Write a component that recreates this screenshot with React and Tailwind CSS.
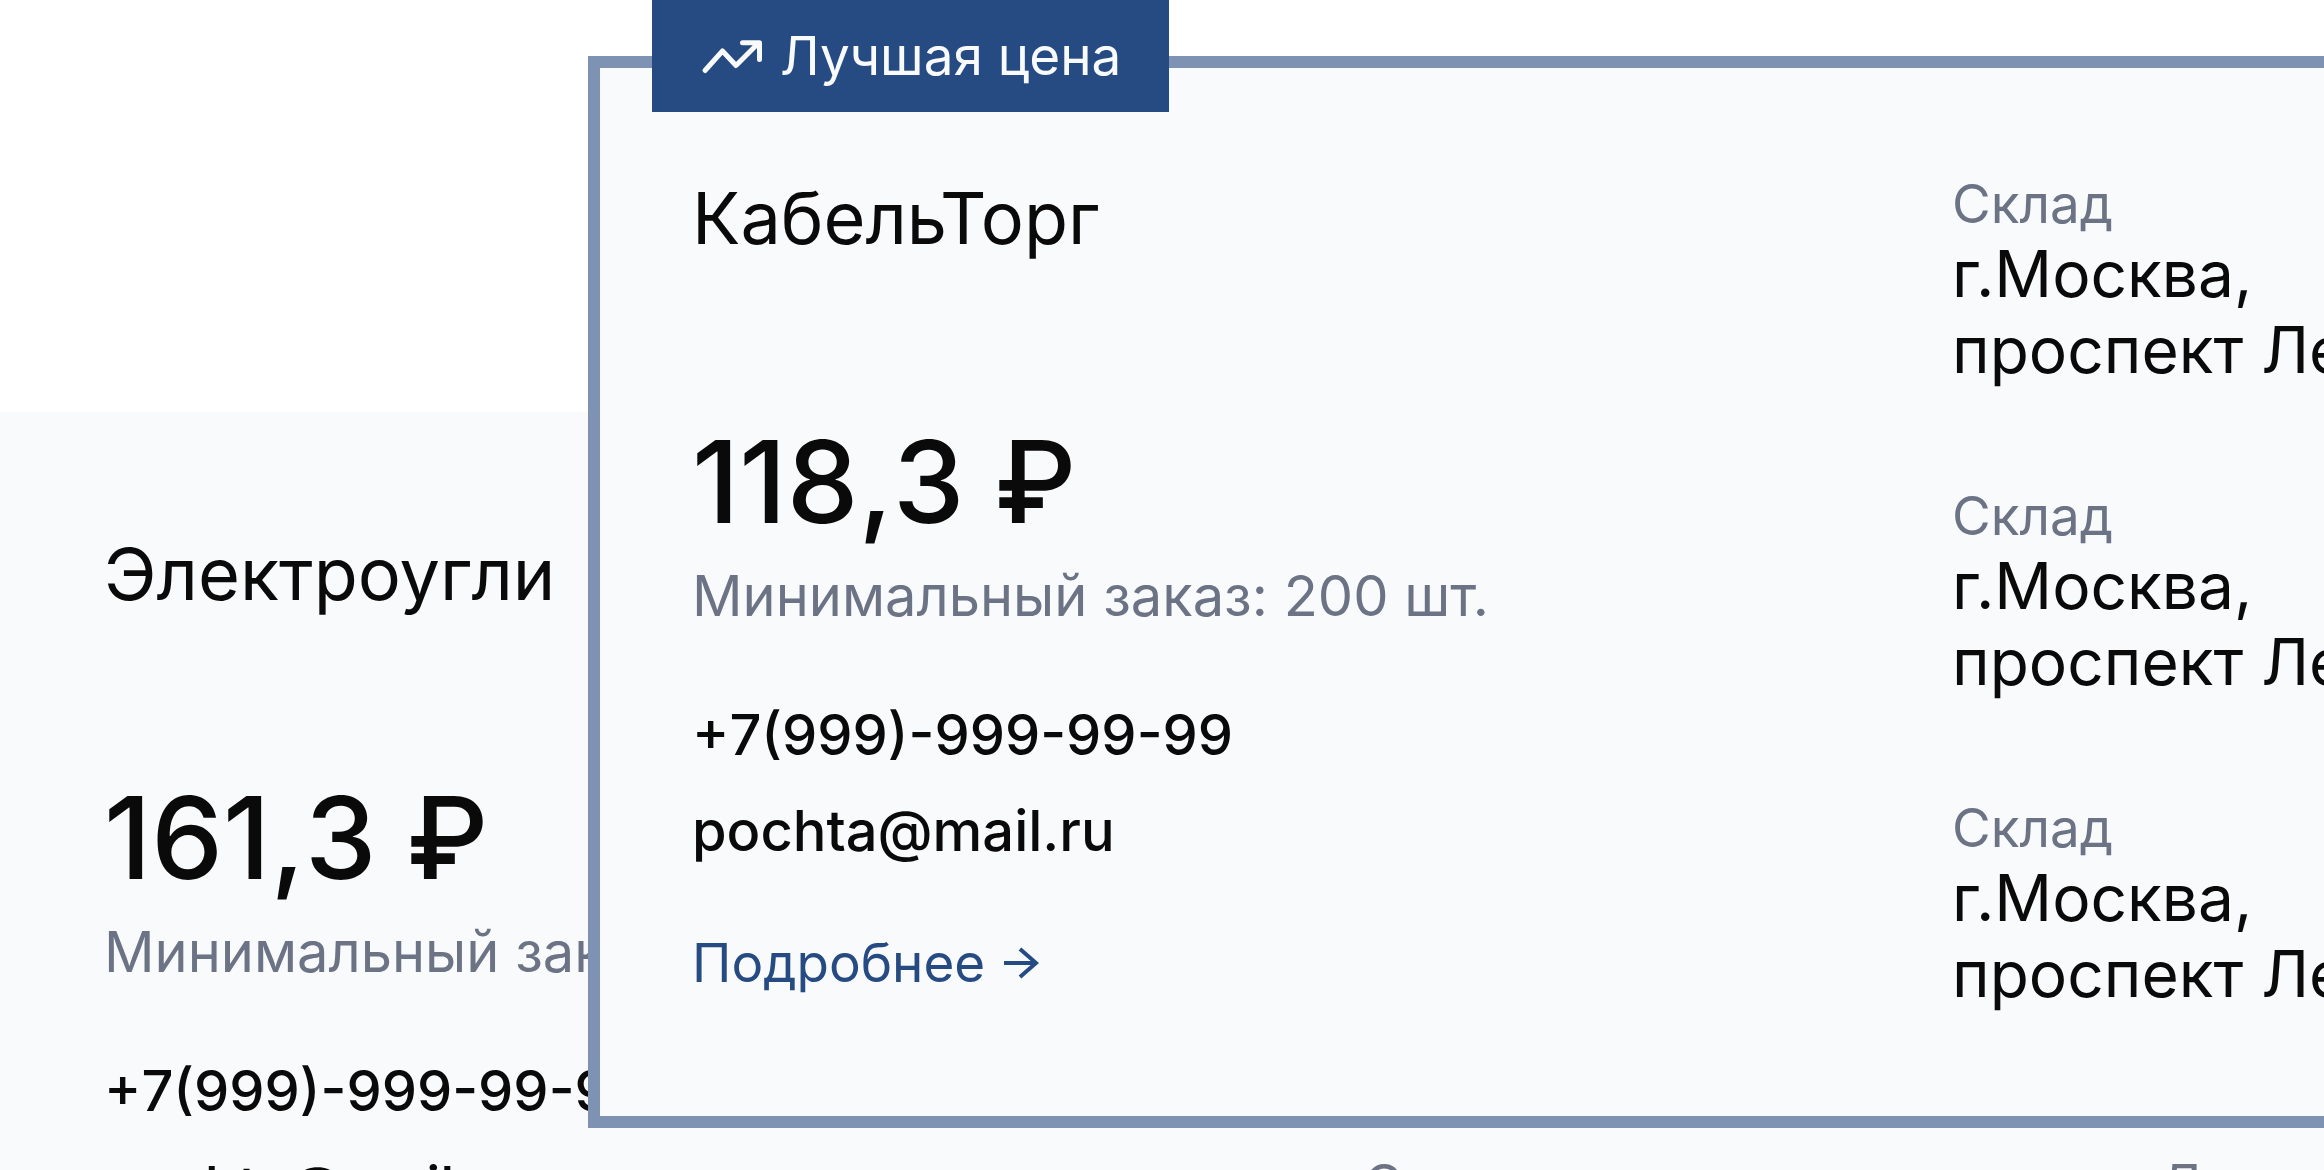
import { clsx } from "clsx";

const WAREHOUSES = [
  { id: 1, city: "г.Москва,", street: "проспект Ленина, 12" },
  { id: 2, city: "г.Москва,", street: "проспект Ленина, 12" },
  { id: 3, city: "г.Москва,", street: "проспект Ленина, 12" },
];

const OFFERS = {
  regular: { name: "Электроугли", price: "161,3 ₽" },
  best: { name: "КабельТорг", price: "118,3 ₽" },
};

function TrendIcon() {
  return (
    <svg className="w-16 h-10 flex-shrink-0" viewBox="0 0 64 40" fill="none" aria-hidden="true">
      <path
        d="M5 34.5 22.500 15 36 29.500 58.500 7M42.500 6.700H59.500V23.500"
        stroke="currentColor"
        strokeWidth="5"
        strokeLinecap="round"
        strokeLinejoin="round"
      />
    </svg>
  );
}

function ArrowIcon() {
  return (
    <svg className="w-9 h-9" viewBox="0 0 36 36" fill="none" aria-hidden="true">
      <path d="M1 18H34M17 4l16 14-16 14" stroke="currentColor" strokeWidth="4" />
    </svg>
  );
}

function OfferCard({ offer, best, className }) {
  return (
    <article
      className={clsx(
        "relative grid grid-cols-[1260px_796px_auto] bg-[#f9fafc] border-[12px] p-[104px] pl-[92px]",
        best ? "border-[#7e92b3]" : "border-[#f9fafc]",
        className,
      )}
    >
      {best && (
        <div className="absolute -top-[68px] left-[52px] h-28 px-12 flex items-center gap-4 bg-[#264b82] text-[#f9fafc] text-[53px] leading-[64px] whitespace-nowrap">
          <TrendIcon />
          Лучшая цена
        </div>
      )}

      <div className="flex flex-col items-start">
        <h2 className="text-[72px] leading-[92px]">{offer.name}</h2>
        <p className="mt-[150px] text-[114px] leading-[136px] font-medium [font-kerning:none]">{offer.price}</p>
        <p className="mt-[12px] text-[56px] leading-[68px] text-[#6b7385]">Минимальный заказ: 200 шт.</p>
        <a href="tel:+79999999999" className="mt-[71px] text-[56px] leading-[68px] font-medium [font-kerning:none]">
          +7(999)-999-99-99
        </a>
        <a href="mailto:pochta@mail.ru" className="mt-[28px] text-[56px] leading-[68px] font-medium">
          pochta@mail.ru
        </a>
        <a href="#details" className="mt-[64px] flex items-center gap-[18px] text-[53px] leading-[68px] text-[#264b82]">
          Подробнее
          <ArrowIcon />
        </a>
      </div>

      <ul className="flex flex-col gap-24">
        {WAREHOUSES.map((w) => (
          <li key={w.id}>
            <p className="text-[53px] leading-[64px] text-[#6b7385]">Склад</p>
            <address className="not-italic text-[64px] leading-[76px] whitespace-nowrap">
              {w.city}
              <br />
              {w.street}
            </address>
          </li>
        ))}
      </ul>

      <ul className="flex flex-col gap-24">
        {WAREHOUSES.map((w) => (
          <li key={w.id}>
            <p className="text-[53px] leading-[64px] text-[#6b7385]">Доставка</p>
            <p className="text-[64px] leading-[76px] whitespace-nowrap">
              1-2 дня,
              <br />
              бесплатно
            </p>
          </li>
        ))}
      </ul>
    </article>
  );
}

export default function App() {
  return (
    <main className="h-screen overflow-hidden bg-white text-[#0a0a0a] font-['Inter',sans-serif]">
      <div className="grid items-start">
        <OfferCard offer={OFFERS.regular} className="[grid-area:1/1] mt-[412px]" />
        <OfferCard offer={OFFERS.best} best className="[grid-area:1/1] mt-[56px] ml-[588px]" />
      </div>
    </main>
  );
}
